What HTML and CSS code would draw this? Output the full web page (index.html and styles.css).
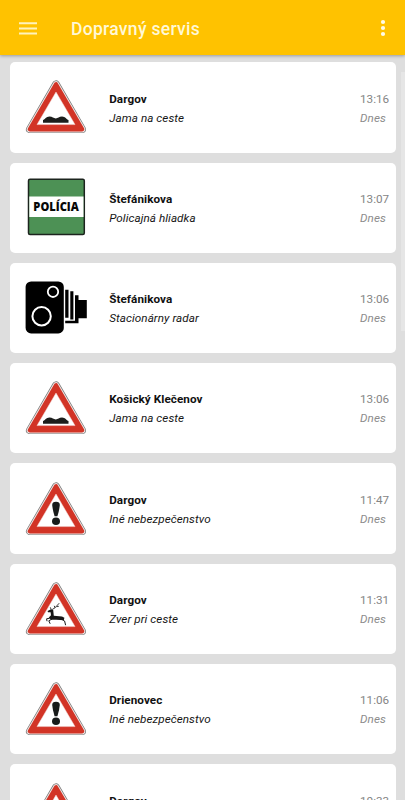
FILE: index.html
```html
<!DOCTYPE html>
<html lang="sk">
<head>
<meta charset="utf-8">
<title>Dopravný servis</title>
<link rel="stylesheet" href="styles.css">
</head>
<body>
<svg class="defs" width="0" height="0" aria-hidden="true">
  <symbol id="warning" viewBox="0 0 80 90">
    <path d="M46 21.2L19.8 66.3H72.2Z" fill="#777" stroke="#777" stroke-width="7.6" stroke-linejoin="round"/>
    <path d="M46 21.2L19.8 66.3H72.2Z" fill="#eee" stroke="#f0e4e2" stroke-width="6.2" stroke-linejoin="round"/>
    <path d="M46 21.2L19.8 66.3H72.2Z" fill="#d23426" stroke="#d23426" stroke-width="4.2" stroke-linejoin="round"/>
    <path d="M46 29L27 61.6H65Z" fill="#fff" stroke="#f5d8d4" stroke-width=".5"/>
  </symbol>
  <symbol id="bump" viewBox="0 0 80 90">
    <use href="#warning"/>
    <path d="M33 59.8V57C35 56.7 36 53.6 39.5 53.6C42.5 53.6 43.5 55.4 45.8 55.4C48 55.4 49 53.6 52 53.6C55.5 53.6 56.5 56.7 58.5 57V59.8Z" fill="#1c1e1c"/>
  </symbol>
  <symbol id="danger" viewBox="0 0 80 90">
    <use href="#warning"/>
    <path d="M42.2 40Q42.2 36.8 46 36.8Q49.8 36.8 49.8 40Q49.4 45 47.4 51.3H44.6Q42.6 45 42.2 40Z" fill="#171b1a"/>
    <ellipse cx="46" cy="56.3" rx="4" ry="3.8" fill="#171b1a"/>
  </symbol>
  <symbol id="deer" viewBox="0 0 80 90">
    <use href="#warning"/>
    <path d="M37.6 46L41 44.3L43.2 45L43.8 50.7L52 51.5L54.4 52.8L53.8 55.2L50.3 55L46 54.8L41 54.8L38.8 52.6L41 50.3L40.6 47.3L38 47.2Z" fill="#171717"/>
    <path d="M41.2 44.6L40.3 42.3M42.2 44.5L45 42.8L49.2 38.2M45 42.7L44.2 40.8M46.6 41.7L48.8 41.3" fill="none" stroke="#252525" stroke-width=".9"/>
    <path d="M39.8 53.2L36.6 53.8L37 56.2M42 54L38.8 55.8L40.2 58.8M51.2 54L54.6 56L55.6 60.2" fill="none" stroke="#171717" stroke-width="1"/>
  </symbol>
  <symbol id="police" viewBox="0 0 80 90">
    <rect x="18.5" y="15.2" width="55.8" height="55.4" rx="1.5" fill="#4d9155" stroke="#1c241e" stroke-width="1.5"/>
    <path d="M19.3 32.4H73.5V52.9H19.3Z" fill="#fff"/>
    <text x="46.1" y="47" text-anchor="middle" textLength="45.5" lengthAdjust="spacingAndGlyphs" class="police-text">POLÍCIA</text>
  </symbol>
  <symbol id="radar" viewBox="0 0 80 90">
    <rect x="15.6" y="17.4" width="38.2" height="52" rx="5.5" fill="#000"/>
    <circle cx="43" cy="27.8" r="5.2" fill="none" stroke="#fff" stroke-width="1.8"/>
    <circle cx="31.6" cy="52.2" r="9.2" fill="none" stroke="#fff" stroke-width="2"/>
    <path d="M55.2 25.8H58.5V53.7H55.2ZM60.3 27.3H63.4V55.4H60.3ZM65 31.3H68.5V36H76.8V54.3H68.5V59.3H55.2V56.7H65Z" fill="#000"/>
  </symbol>
</svg>
<header class="bar">
  <svg class="menu" viewBox="0 0 18 13"><path d="M0 1.2H18M0 6.4H18M0 11.6H18"/></svg>
  <h1>Dopravný servis</h1>
  <svg class="more" viewBox="0 0 6 18"><circle cx="3" cy="3" r="2.1"/><circle cx="3" cy="9" r="2.1"/><circle cx="3" cy="15" r="2.1"/></svg>
</header>
<main class="list">
  <article class="card"><svg class="sign"><use href="#bump"/></svg><div class="info"><h2>Dargov</h2><p>Jama na ceste</p></div><div class="when"><time>13:16</time><p>Dnes</p></div></article>
  <article class="card"><svg class="sign"><use href="#police"/></svg><div class="info"><h2>Štefánikova</h2><p>Policajná hliadka</p></div><div class="when"><time>13:07</time><p>Dnes</p></div></article>
  <article class="card"><svg class="sign"><use href="#radar"/></svg><div class="info"><h2>Štefánikova</h2><p>Stacionárny radar</p></div><div class="when"><time>13:06</time><p>Dnes</p></div></article>
  <article class="card"><svg class="sign"><use href="#bump"/></svg><div class="info"><h2>Košický Klečenov</h2><p>Jama na ceste</p></div><div class="when"><time>13:06</time><p>Dnes</p></div></article>
  <article class="card"><svg class="sign"><use href="#danger"/></svg><div class="info"><h2>Dargov</h2><p>Iné nebezpečenstvo</p></div><div class="when"><time>11:47</time><p>Dnes</p></div></article>
  <article class="card"><svg class="sign"><use href="#deer"/></svg><div class="info"><h2>Dargov</h2><p>Zver pri ceste</p></div><div class="when"><time>11:31</time><p>Dnes</p></div></article>
  <article class="card"><svg class="sign"><use href="#danger"/></svg><div class="info"><h2>Drienovec</h2><p>Iné nebezpečenstvo</p></div><div class="when"><time>11:06</time><p>Dnes</p></div></article>
  <article class="card"><svg class="sign"><use href="#bump"/></svg><div class="info"><h2>Dargov</h2><p>Jama na ceste</p></div><div class="when"><time>10:33</time><p>Dnes</p></div></article>
</main>
<div class="scrollbar"></div>
</body>
</html>
```
FILE: styles.css
```css
* { box-sizing: border-box; }
body {
  margin: 0;
  height: 800px;
  overflow: hidden;
  position: relative;
  background: #dedede;
  font-family: Roboto, "Liberation Sans", sans-serif;
}
h1, h2, p { margin: 0; }
.defs { position: absolute; }
.bar {
  display: flex;
  align-items: center;
  height: 55px;
  padding: 1px 19px 0 18.5px;
  background: #ffc200;
  box-shadow: 0 1px 3px rgba(0, 0, 0, .3);
}
.menu { width: 18px; height: 13px; stroke: #fff3bd; stroke-width: 2; }
.bar h1 {
  margin: 1px 0 0 34.5px;
  color: #fff8d6;
  font-size: 17.5px;
  font-weight: 500;
  line-height: 24px;
  letter-spacing: .3px;
}
.more { width: 6px; height: 18px; margin-left: auto; fill: #fffbe8; }
.list {
  display: flex;
  flex-direction: column;
  gap: 10px;
  padding: 7.3px 9px 0 9.7px;
}
.card {
  display: flex;
  flex: none;
  height: 90.3px;
  background: #fff;
  border-radius: 5px;
}
.sign { flex: none; width: 80px; height: 90px; margin: 1.2px 0 -1.2px; }
.police-text { font: 800 11.4px "Open Sans", "Noto Sans", sans-serif; fill: #080808; }
.info { flex: 1; padding: 26.3px 0 0 19.5px; }
.info h2 {
  color: #111;
  font-size: 11.7px;
  font-weight: 700;
  line-height: 20px;
  letter-spacing: .06px;
}
.info p, .when p { font-size: 11.7px; font-style: italic; line-height: 19.8px; }
.info p { color: #161616; letter-spacing: .06px; }
.when { width: 36px; padding-top: 26.3px; color: #858585; }
.when p { color: #8c8c8c; letter-spacing: .1px; }
.when time { display: block; font-size: 11.7px; line-height: 20px; }
.scrollbar {
  position: absolute;
  top: 72px;
  right: 0;
  width: 4px;
  height: 259px;
  background: #e6e6e6;
}
```
